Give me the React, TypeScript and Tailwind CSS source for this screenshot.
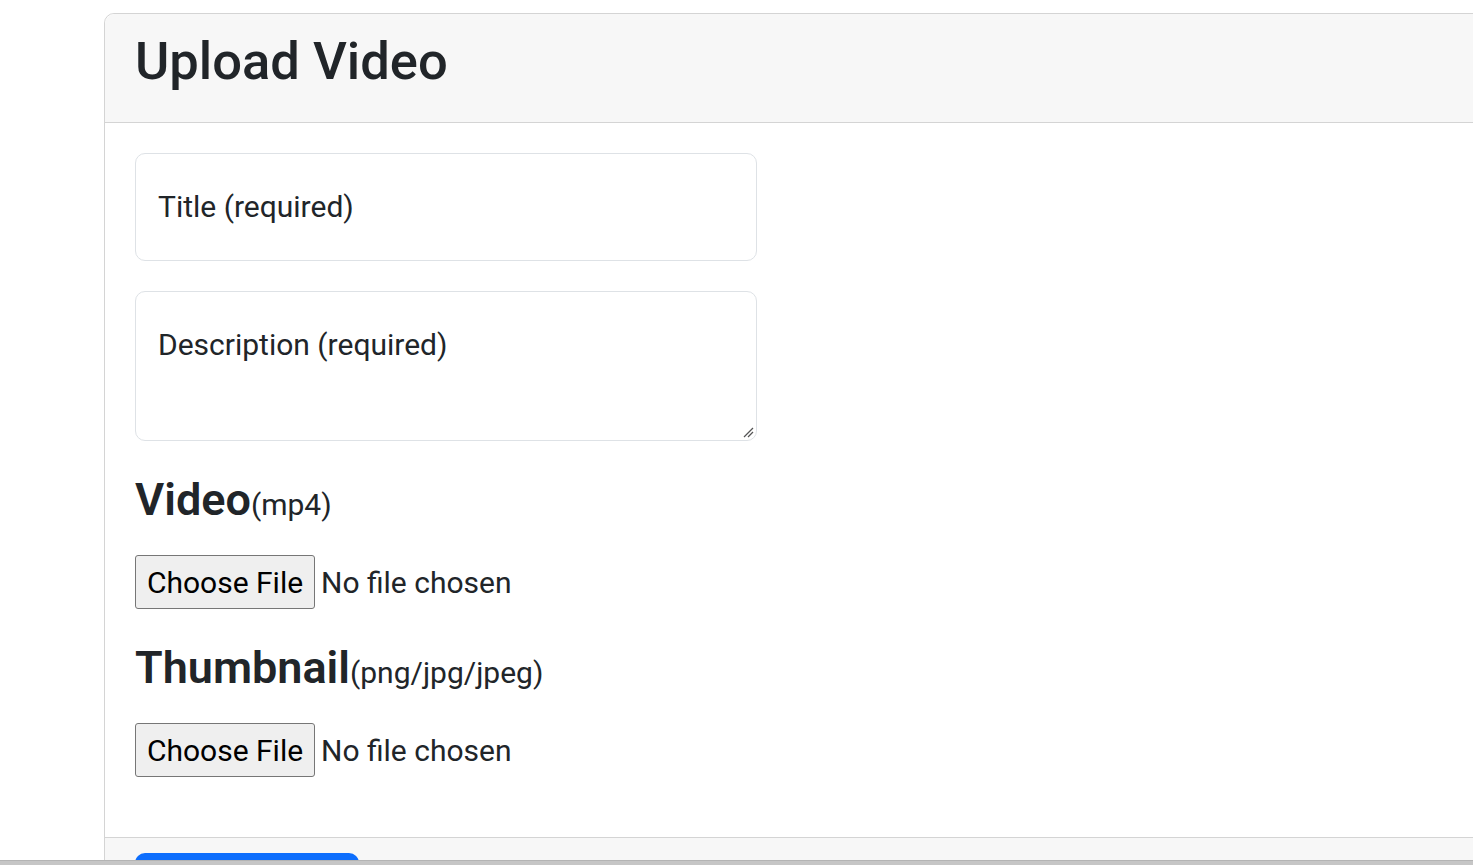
import React from "react";

function FileInput() {
  return (
    <div className="flex items-center h-[54px]">
      <div className="h-[54px] w-[180px] flex items-center justify-center bg-[#efefef] border border-[#767676] rounded-[3px] text-[30px] text-black">
        Choose File
      </div>
      <span className="ml-[6px] text-[30px] text-[#212529]">No file chosen</span>
    </div>
  );
}

export default function App() {
  return (
    <div
      className="w-full h-[865px] flex flex-col overflow-hidden bg-white"
      style={{ fontFamily: "Roboto, 'Noto Sans', sans-serif" }}
    >
      <div className="flex-1 min-h-0 overflow-hidden pl-[104px] pt-[13px]">
        <div className="w-[calc(100%+20px)] border border-[#d4d4d4] rounded-tl-[10px] bg-white">
          <div className="h-[109px] bg-[#f7f7f7] border-b border-[#d4d4d4] rounded-tl-[10px] px-[30px] flex items-center">
            <h1 className="text-[52.5px] font-medium text-[#212529] leading-none -mt-[14px]">Upload Video</h1>
          </div>
          <div className="px-[30px] pt-[30px] pb-[60px]">
            <div className="w-[622px] h-[108px] border border-[#dee2e6] rounded-[10px] flex items-center pl-[22px] pb-[2px] text-[30px] text-[#212529]">
              Title (required)
            </div>
            <div className="relative mt-[30px] w-[622px] h-[150px] border border-[#dee2e6] rounded-[10px] pl-[22px] pt-[35px] text-[30px] text-[#212529] leading-[1.2]">
              Description (required)
              <svg className="absolute right-[2px] bottom-[2px]" width="12" height="12" viewBox="0 0 12 12">
                <line x1="2" y1="11" x2="11" y2="2" stroke="#555" strokeWidth="1.2" />
                <line x1="6" y1="11" x2="11" y2="6" stroke="#555" strokeWidth="1.2" />
              </svg>
            </div>
            <div className="mt-[32px] flex items-baseline text-[#212529]">
              <span className="text-[45px] font-semibold leading-[1.2]">Video</span>
              <span className="text-[30px]">(mp4)</span>
            </div>
            <div className="mt-[28px]">
              <FileInput />
            </div>
            <div className="mt-[32px] flex items-baseline text-[#212529]">
              <span className="text-[45px] font-semibold leading-[1.2]">Thumbnail</span>
              <span className="text-[30px]">(png/jpg/jpeg)</span>
            </div>
            <div className="mt-[28px]">
              <FileInput />
            </div>
          </div>
          <div className="border-t border-[#d4d4d4] bg-[#f7f7f7] px-[30px] pt-[15px] pb-[15px]">
            <button className="w-[224px] h-[56px] bg-[#0d6efd] rounded-[10px] text-white text-[30px]">
              Upload
            </button>
          </div>
        </div>
      </div>
      <div className="h-[5px] shrink-0 bg-[#c6c6c6] border-t border-[#b4b4b4]" />
    </div>
  );
}
